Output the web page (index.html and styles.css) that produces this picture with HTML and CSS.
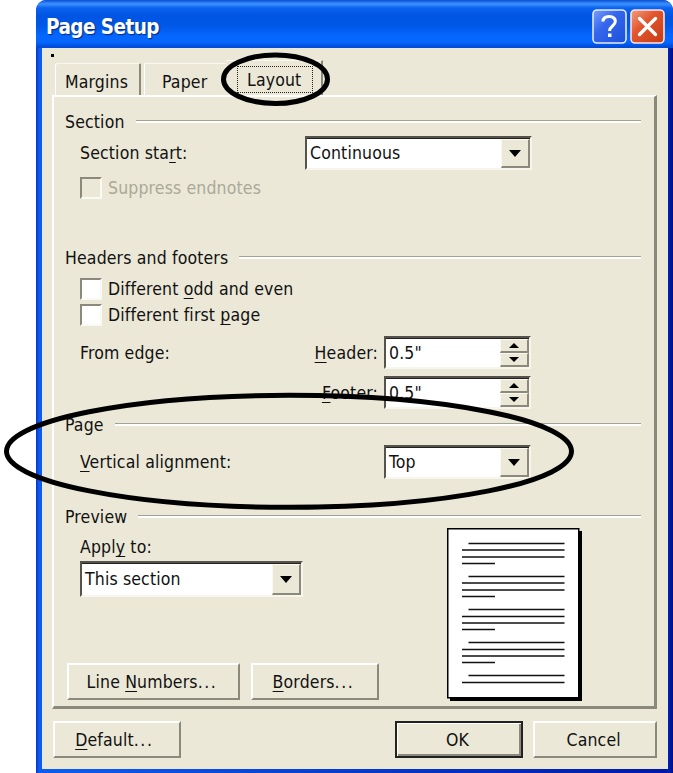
FILE: index.html
```html
<!DOCTYPE html>
<html lang="en">
<head>
<meta charset="utf-8">
<title>Page Setup</title>
<link rel="stylesheet" href="styles.css">
</head>
<body>
<main class="window">
  <header class="titlebar">
    <h1>Page Setup</h1>
    <svg class="caption" width="35" height="35" viewBox="0 0 35 35">
      <defs>
        <linearGradient id="blue" x1="0" y1="0" x2="1" y2="1"><stop offset="0" stop-color="#7d9ffa"/><stop offset=".4" stop-color="#3467ec"/><stop offset="1" stop-color="#1c50d8"/></linearGradient>
        <linearGradient id="red" x1="0" y1="0" x2="1" y2="1"><stop offset="0" stop-color="#f0a083"/><stop offset=".4" stop-color="#e2572f"/><stop offset="1" stop-color="#c63a10"/></linearGradient>
      </defs>
      <rect x="1" y="1" width="33" height="33" rx="4" fill="url(#blue)" stroke="#e4ecff" stroke-width="1.6"/>
      <path d="M11 12.500C11 9 13.500 7.500 17 7.500C21 7.500 23.300 9.500 23.300 12.500C23.300 17 17.500 17 17.500 22" fill="none" stroke="#fff" stroke-width="3"/>
      <path d="M16 24.500h3.500v3.500H16z" fill="#fff"/>
    </svg>
    <svg class="caption" width="35" height="35" viewBox="0 0 35 35">
      <rect x="1" y="1" width="33" height="33" rx="4" fill="url(#red)" stroke="#fbe4e4" stroke-width="1.6"/>
      <path d="M9.500 9.500L25.500 25.500M25.500 9.500L9.500 25.500" stroke="#fff" stroke-width="3.300" stroke-linecap="round"/>
    </svg>
  </header>
  <div class="client">
    <i class="speck"></i>
    <nav class="tabs">
      <span class="tab tab-margins">Margins</span>
      <span class="tab tab-paper">Paper</span>
      <span class="tab tab-layout"><span class="focus">Layout</span></span>
    </nav>
    <section class="panel">
      <h2 class="legend legend-first">Section</h2>
      <div class="row row-start"><label>Section sta<u>r</u>t:</label>
        <div class="combo combo-wide"><span>Continuous</span><i class="drop"></i></div></div>
      <div class="row row-check disabled"><i class="box"></i><label>Suppress endnotes</label></div>
      <h2 class="legend legend-headers">Headers and footers</h2>
      <div class="row row-check row-odd"><i class="box"></i><label>Different <u>o</u>dd and even</label></div>
      <div class="row row-check row-first"><i class="box"></i><label>Different first <u>p</u>age</label></div>
      <div class="row row-spin row-header"><label>From edge:</label><label class="edge"><u>H</u>eader:</label>
        <div class="spin"><span>0.5"</span><div class="arrows"><i class="up"></i><i class="down"></i></div></div></div>
      <div class="row row-spin row-footer"><label class="edge"><u>F</u>ooter:</label>
        <div class="spin"><span>0.5"</span><div class="arrows"><i class="up"></i><i class="down"></i></div></div></div>
      <h2 class="legend legend-page">Page</h2>
      <div class="row row-vertical"><label><u>V</u>ertical alignment:</label>
        <div class="combo combo-small"><span>Top</span><i class="drop"></i></div></div>
      <h2 class="legend legend-preview">Preview</h2>
      <div class="preview">
        <div class="apply">
          <label class="apply-label">Appl<u>y</u> to:</label>
          <div class="combo combo-apply"><span>This section</span><i class="drop"></i></div>
          <div class="actions">
            <button class="btn btn-lines">Line <u>N</u>umbers<span class="dots">...</span></button>
            <button class="btn btn-borders"><u>B</u>orders<span class="dots">...</span></button>
          </div>
        </div>
        <svg class="sheet" width="136" height="174" viewBox="0 0 136 174">
          <path d="M3 3h132v170H3z" fill="#000"/>
          <path d="M.75 .75h131v169H.75z" fill="#fff" stroke="#000" stroke-width="1.500"/>
          <path d="M21.500 15.500h96M15 22h102.500M15 29h102.500M15 35.500h33M21.500 48.500h96M15 55h102.500M15 62h102.500M15 68.500h33M21.500 81.500h96M15 88.500h102.500M15 95h102.500M15 101.500h33M21.500 114.500h96M15 121.500h102.500M15 128h102.500M15 134.500h33M21.500 147.500h96M15 154.500h102.500" stroke="#111" stroke-width="1.700"/>
        </svg>
      </div>
    </section>
    <footer class="buttons">
      <button class="btn btn-default"><u>D</u>efault<span class="dots">...</span></button>
      <button class="btn btn-ok">OK</button>
      <button class="btn btn-cancel">Cancel</button>
    </footer>
  </div>
</main>
<svg class="marks" width="673" height="773" viewBox="0 0 673 773" fill="none" stroke="#000" stroke-width="5">
  <ellipse cx="275.500" cy="79.200" rx="52" ry="24.300"/>
  <ellipse cx="289" cy="451.300" rx="282.500" ry="56"/>
</svg>
</body>
</html>
```
FILE: styles.css
```css
* { box-sizing: border-box; }
body {
  margin: 0;
  width: 673px;
  height: 773px;
  overflow: hidden;
  position: relative;
  background: #fff;
  color: #111;
  font: 17.5px/22px "DejaVu Sans Condensed", "DejaVu Sans", sans-serif;
  font-stretch: condensed;
  letter-spacing: 0.15px;
  white-space: nowrap;
}
.window {
  margin-left: 36px;
  width: 637px;
  height: 773px;
  padding: 0 5px 4px 6px;
  border-radius: 10px 10px 0 0;
  background: linear-gradient(90deg, #0833c8 0, #0d5cf0 3px, #0d5cf0 6px, #0d5cf0 20px, #0018a8 630px, #0024b8 632px, #000e84 100%);
  overflow: hidden;
}
.titlebar {
  height: 48px;
  margin: 0 -5px 0 -6px;
  padding: 9px 8px 0 10px;
  display: flex;
  gap: 3px;
  background: linear-gradient(#0b50d2 0, #3c92ff 4px, #0a62ee 8px, #0055e2 16px, #0058e8 26px, #0567ff 36px, #0567ff 42px, #004bd8 47px);
}
h1 {
  flex: 1;
  margin: 0;
  color: #fff;
  font: bold 20.5px/37px "DejaVu Sans Condensed", sans-serif;
  font-stretch: condensed;
  letter-spacing: -0.55px;
  text-shadow: 1px 1px 1px #0a2a82;
}
.client { height: 721px; padding: 15px 11px 0 10px; background: #ebe8d7; position: relative; }
.speck { position: absolute; left: 9px; top: 6px; width: 3px; height: 3px; background: #000; }
.tabs { display: flex; height: 32px; padding-left: 3px; }
.tab { display: flex; align-items: center; border-top: 1px solid #faf8ef; padding-top: 4px; height: 32px; }
.tab-margins { width: 86px; padding-left: 9px; border-left: 1px solid #fff; border-right: 2px solid #8b897c; border-radius: 3px 2px 0 0; }
.tab-paper { width: 82px; padding-left: 17px; border-left: 1px solid #fff; margin-left: 3px; }
.tab-layout { width: 97px; height: 35px; margin-top: -3px; padding: 2px 0 0 11px; border-right: 2px solid #8b897c; }
.focus { border: 1px dotted #222; width: 76px; height: 27px; line-height: 26px; padding-left: 9px; }
.panel {
  height: 614px;
  padding: 14px 13px 0;
  border: 2px solid;
  border-color: #fff #8b897c #8b897c #fff;
  border-right-width: 3px;
  border-bottom-width: 3px;
  display: flex;
  flex-direction: column;
}
.legend { display: flex; align-items: center; gap: 11px; height: 22px; margin: 0; font: inherit; font-stretch: inherit; margin-left: -2px; }
.legend::after { content: ""; flex: 1; height: 2px; margin-bottom: 2px; border-top: 1px solid #a4a296; background: #fff; }
.row { display: flex; align-items: center; padding-left: 13px; position: relative; }
.row-start { height: 34px; margin-top: 3px; }
.row-start label { width: 225px; }
.row-check { height: 22px; gap: 6px; }
.row-start + .row-check { margin-top: 7px; }
.disabled { color: #aaa899; }
.disabled .box { background: #ebe8d7; }
.box { width: 22px; height: 22px; background: #fff; border: 2px solid; border-color: #8b897c #faf9f2 #faf9f2 #8b897c; }
.legend-headers { margin-top: 48px; }
.row-odd { margin-top: 9px; }
.row-first { margin-top: 4px; }
.row-spin { height: 33px; }
.row-header { margin-top: 10px; }
.row-footer { margin-top: 7px; }
.edge { margin-left: auto; margin-right: 6px; }
.spin { display: flex; width: 147px; height: 33px; margin-right: 110px; }
.spin, .combo { background: #fff; border: 2px solid; border-color: #55534c #f8f6ec #f8f6ec #55534c; box-shadow: inset 0 1px #222; }
.spin > span, .combo > span { flex: 1; padding-left: 3px; line-height: 30px; }
.arrows { width: 29px; padding-top: 1px; display: flex; flex-direction: column; }
.up, .down, .drop {
  flex: 1;
  display: flex;
  align-items: center;
  justify-content: center;
  background: #ebe8d7;
  border: 1px solid;
  border-color: #faf8ef #8b897c #8b897c #faf8ef;
  border-bottom-width: 2px;
  border-right-width: 2px;
}
.up::before, .down::before, .drop::before { content: ""; border: 5px solid transparent; border-top: 5px solid #000; border-bottom: 0; }
.up::before { border-top: 0; border-bottom: 5px solid #000; }
.combo { display: flex; height: 34px; }
.combo .drop { flex: 0 0 29px; margin-top: 1px; }
.combo .drop::before { border-width: 7px 6.5px 0; }
.combo-wide { width: 227px; }
.legend-page { margin-top: 5px; }
.row-vertical { height: 34px; margin-top: 9px; }
.row-vertical label { width: 304px; }
.combo-small { width: 147px; }
.legend-preview { margin-top: 27px; }
.preview { display: flex; }
.apply { width: 380px; padding-left: 13px; display: flex; flex-direction: column; }
.apply-label { margin-top: 8px; }
.combo-apply { width: 223px; height: 36px; margin-top: 3px; }
.combo-apply > span { line-height: 33px; }
.actions { display: flex; gap: 11px; margin: 66px 0 0 -13px; }
.btn {
  height: 37px;
  margin: 0;
  padding: 0 3px 0 0;
  font: inherit;
  font-stretch: inherit;
  letter-spacing: inherit;
  color: inherit;
  background: #ebe8d7;
  border: 2px solid;
  border-color: #fff #8b897c #8b897c #fff;
}
.dots { letter-spacing: 1.6px; }
.btn-lines { width: 173px; }
.btn-borders { width: 128px; }
.buttons { display: flex; margin: 12px 0 0 1px; }
.btn-default { width: 128px; padding-right: 5px; }
.btn-ok { width: 129px; margin-left: 214px; border-color: #222; box-shadow: inset 1px 1px #fff, inset -2px -2px #8b897c; }
.btn-cancel { width: 124px; margin-left: 10px; }
u { text-decoration-thickness: 1px; text-underline-offset: 3px; text-decoration-skip-ink: none; }
.marks { position: absolute; left: 0; top: 0; pointer-events: none; }
```
